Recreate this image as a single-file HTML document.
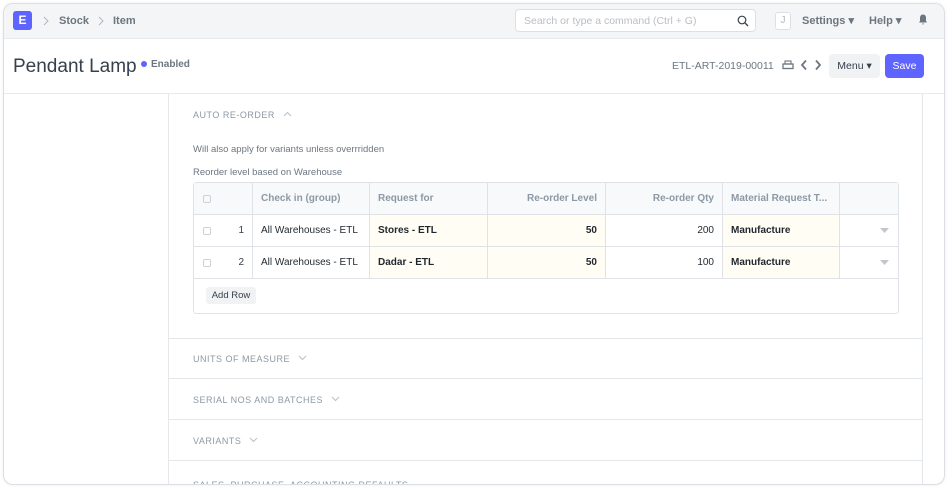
<!DOCTYPE html>
<html><head><meta charset="utf-8"><style>
*{box-sizing:border-box;margin:0;padding:0}
html,body{width:948px;height:488px;overflow:hidden}
body{background:#fff;font-family:"Liberation Sans",sans-serif;position:relative;color:#1f272e}
.win{position:absolute;left:3px;top:3px;width:942px;height:482px;border:1px solid #dcdfe3;border-radius:10px;overflow:hidden;background:#fff;box-shadow:0 0 3px rgba(0,0,0,.08)}
.nav{position:absolute;left:0;top:0;width:100%;height:35px;background:#f4f5f7;border-bottom:1px solid #e8eaed}
.logo{position:absolute;left:9px;top:7px;width:19px;height:19px;background:#5e64ff;border-radius:3px;color:#fff;font-weight:bold;font-size:12px;text-align:center;line-height:19px}
.crumb{position:absolute;top:11px;font-size:11px;font-weight:bold;color:#6c7680}
.search{position:absolute;left:511px;top:5px;width:241px;height:23px;border:1px solid #dcdfe3;border-radius:4px;background:#fff;font-size:10.5px;color:#b8bec5;padding:5px 8px}
.hdr{position:absolute;left:0;top:35px;width:100%;height:55px;border-bottom:1px solid #e8eaed}
.title{position:absolute;left:9px;top:17px;font-size:19px;color:#36414c}
.sect{position:absolute;left:164px;width:755px;border-left:1px solid #e5e8eb;border-right:1px solid #e5e8eb;border-bottom:1px solid #e5e8eb}
.st{position:absolute;left:24px;font-size:9px;letter-spacing:.5px;color:#8d99a6;white-space:nowrap}
.st svg{margin-left:8px;vertical-align:1px}
.tbl{position:absolute;left:189px;top:178px;width:706px;height:132px;border:1px solid #dfe3e7;border-radius:3px}
.row{position:absolute;left:0;width:100%;height:32px;border-bottom:1px solid #dfe3e7}
.c{position:absolute;top:0;height:31px;border-right:1px solid #dfe3e7;font-size:10px;line-height:31px;padding:0 8px}
.cb{position:absolute;left:9px;top:12px;width:8px;height:8px;border:1px solid #ccd1d6;border-radius:2px}
</style></head><body>
<div class="win">
<div class="nav">
<div class="logo">E</div>
<svg style="position:absolute;left:39px;top:12px" width="6" height="10" viewBox="0 0 6 10"><path d="M1 1l4 4-4 4" fill="none" stroke="#b0b6bd" stroke-width="1"/></svg>
<span class="crumb" style="left:55px">Stock</span>
<svg style="position:absolute;left:94px;top:12px" width="6" height="10" viewBox="0 0 6 10"><path d="M1 1l4 4-4 4" fill="none" stroke="#b0b6bd" stroke-width="1"/></svg>
<span class="crumb" style="left:109px">Item</span>
<div class="search">Search or type a command (Ctrl + G)
<svg style="position:absolute;right:6px;top:5px" width="12" height="12" viewBox="0 0 12 12"><circle cx="5" cy="5" r="3.8" fill="none" stroke="#36414c" stroke-width="1.2"/><path d="M8 8l3 3" stroke="#36414c" stroke-width="1.3"/></svg></div>
<div style="position:absolute;left:771px;top:8px;width:16px;height:18px;border:1px solid #dcdfe3;border-radius:3px;background:#fff;font-size:10px;color:#b0b6bd;text-align:center;line-height:16px">J</div>
<span class="crumb" style="left:798px;top:10px">Settings &#9662;</span>
<span class="crumb" style="left:865px;top:10px">Help &#9662;</span>
<svg style="position:absolute;left:914px;top:10px" width="10" height="11" viewBox="0 0 10 11"><path d="M5 0.5C3 0.5 2 2 2 4v3L1 8.5h8L8 7V4c0-2-1-3.5-3-3.5zM4 9.5h2a1 1 0 0 1-2 0z" fill="#6c7680"/></svg>
</div>
<div class="hdr">
<div class="title">Pendant Lamp</div>
<span style="position:absolute;left:137px;top:22px;width:6px;height:6px;border-radius:50%;background:#5e64ff"></span>
<span style="position:absolute;left:147px;top:20px;font-size:10px;font-weight:bold;color:#6c7680">Enabled</span>
<span style="position:absolute;left:668px;top:21px;font-size:10.5px;color:#6c7680">ETL-ART-2019-00011</span>
<svg style="position:absolute;left:778px;top:21px" width="12" height="11" viewBox="0 0 12 11"><rect x="1" y="4" width="10" height="4.5" fill="none" stroke="#6c7680" stroke-width="1.3"/><rect x="3" y="1" width="6" height="3" fill="none" stroke="#6c7680" stroke-width="1.1"/></svg>
<svg style="position:absolute;left:796px;top:20px" width="24" height="12" viewBox="0 0 24 12"><path d="M6 1.5L2 6l4 4.5M16 1.5L20 6l-4 4.5" fill="none" stroke="#6c7680" stroke-width="1.8"/></svg>
<div style="position:absolute;left:825px;top:15px;width:51px;height:24px;background:#f0f2f4;border-radius:4px;font-size:10.5px;line-height:24px;text-align:center;color:#36414c">Menu &#9662;</div>
<div style="position:absolute;left:881px;top:15px;width:39px;height:24px;background:#5e64ff;border-radius:4px;font-size:10.5px;line-height:24px;text-align:center;color:#fff">Save</div>
</div>
<div class="sect" style="top:90px;height:245px">
<span class="st" style="top:16px">AUTO RE-ORDER<svg width="9" height="6" viewBox="0 0 9 6"><path d="M1 5l3.5-3.5L8 5" fill="none" stroke="#b8c0c8" stroke-width="1"/></svg></span>
<span style="position:absolute;left:24px;top:50px;font-size:9.5px;color:#6c7680">Will also apply for variants unless overrridden</span>
<span style="position:absolute;left:24px;top:73px;font-size:9.5px;color:#6c7680">Reorder level based on Warehouse</span>
</div>
<div class="tbl">
<div class="row" style="top:0;background:#f7f9fa;font-weight:bold;color:#8d99a6">
<div class="c" style="left:0;width:59px"><span class="cb"></span></div>
<div class="c" style="left:59px;width:117px">Check in (group)</div>
<div class="c" style="left:176px;width:118px">Request for</div>
<div class="c" style="left:294px;width:118px;text-align:right">Re-order Level</div>
<div class="c" style="left:412px;width:117px;text-align:right">Re-order Qty</div>
<div class="c" style="left:529px;width:117px">Material Request T...</div>
</div>
<div class="row" style="top:32px">
<div class="c" style="left:0;width:59px;text-align:right;color:#36414c"><span class="cb"></span>1</div>
<div class="c" style="left:59px;width:117px">All Warehouses - ETL</div>
<div class="c" style="left:176px;width:118px;background:#fffdf4;font-weight:bold">Stores - ETL</div>
<div class="c" style="left:294px;width:118px;background:#fffdf4;font-weight:bold;text-align:right">50</div>
<div class="c" style="left:412px;width:117px;text-align:right">200</div>
<div class="c" style="left:529px;width:117px;background:#fffdf4;font-weight:bold">Manufacture</div>
<svg style="position:absolute;left:686px;top:13px" width="9" height="5" viewBox="0 0 9 5"><path d="M0 0h9L4.5 5z" fill="#c0c6cc"/></svg>
</div>
<div class="row" style="top:64px">
<div class="c" style="left:0;width:59px;text-align:right;color:#36414c"><span class="cb"></span>2</div>
<div class="c" style="left:59px;width:117px">All Warehouses - ETL</div>
<div class="c" style="left:176px;width:118px;background:#fffdf4;font-weight:bold">Dadar - ETL</div>
<div class="c" style="left:294px;width:118px;background:#fffdf4;font-weight:bold;text-align:right">50</div>
<div class="c" style="left:412px;width:117px;text-align:right">100</div>
<div class="c" style="left:529px;width:117px;background:#fffdf4;font-weight:bold">Manufacture</div>
<svg style="position:absolute;left:686px;top:13px" width="9" height="5" viewBox="0 0 9 5"><path d="M0 0h9L4.5 5z" fill="#c0c6cc"/></svg>
</div>
<div style="position:absolute;left:12px;top:104px;width:50px;height:17px;background:#f0f2f4;border-radius:3px;font-size:9.5px;line-height:17px;text-align:center;color:#36414c">Add Row</div>
</div>
<div class="sect" style="top:334px;height:41px"><span class="st" style="top:16px">UNITS OF MEASURE<svg width="9" height="6" viewBox="0 0 9 6"><path d="M1 1l3.5 3.5L8 1" fill="none" stroke="#b8c0c8" stroke-width="1"/></svg></span></div>
<div class="sect" style="top:375px;height:41px"><span class="st" style="top:16px">SERIAL NOS AND BATCHES<svg width="9" height="6" viewBox="0 0 9 6"><path d="M1 1l3.5 3.5L8 1" fill="none" stroke="#b8c0c8" stroke-width="1"/></svg></span></div>
<div class="sect" style="top:416px;height:41px"><span class="st" style="top:16px">VARIANTS<svg width="9" height="6" viewBox="0 0 9 6"><path d="M1 1l3.5 3.5L8 1" fill="none" stroke="#b8c0c8" stroke-width="1"/></svg></span></div>
<div class="sect" style="top:457px;height:24px;border-bottom:none"><span class="st" style="top:19px">SALES, PURCHASE, ACCOUNTING DEFAULTS</span></div>
</div>
</body></html>
